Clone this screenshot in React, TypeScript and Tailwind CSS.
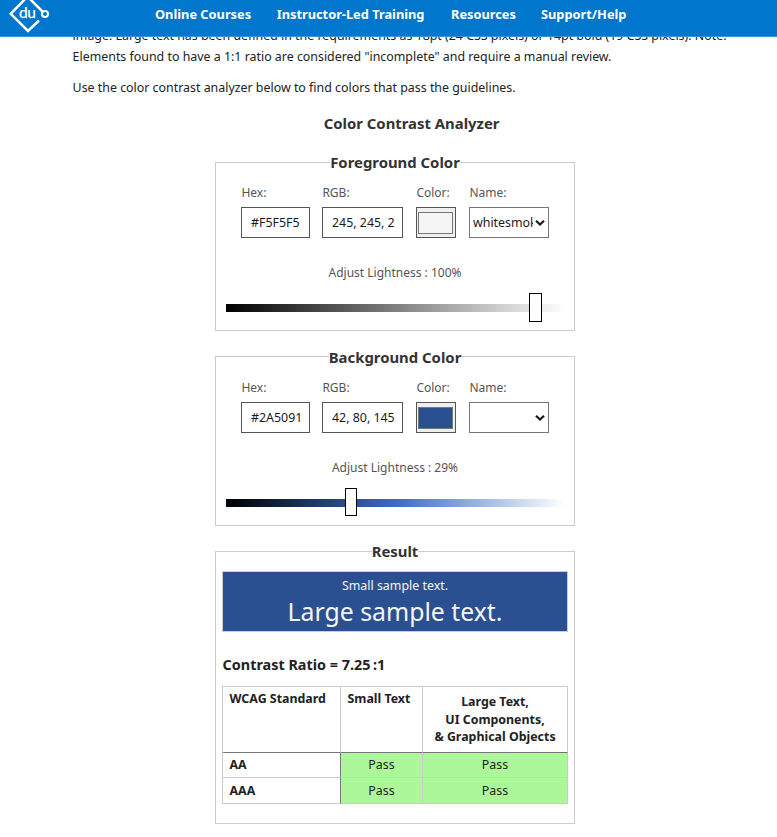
import React from "react";

type PickerProps = {
  title: string;
  hex: string;
  rgb: string;
  name: string;
  lightness: string;
  frameClass: string;
  legendClass: string;
  swatch: string;
  track: string;
  thumb: string;
};

const navLinks = [
  { label: "Online Courses", width: "w-[121.7px]" },
  { label: "Instructor-Led Training", width: "w-[174.3px]" },
  { label: "Resources", width: "w-[90px]" },
  { label: "Support/Help", width: "w-[100px]" },
];

const levels = [
  { name: "AA", pad: "pt-[2px]" },
  { name: "AAA", pad: "pt-[3px]" },
];

function Logo() {
  return (
    <svg width="42" height="37" viewBox="0 0 42 37" fill="none" className="ml-[9px] shrink-0">
      <path d="M33.5 11.5L18.5 -3.5L1.7 13.8L19 31L30 20.5" stroke="#fff" strokeWidth="2.5" />
      <circle cx="36" cy="14" r="3" stroke="#fff" strokeWidth="2" />
      <text
        x="10"
        y="18"
        fill="#fff"
        stroke="#fff"
        strokeWidth="0.25"
        fontSize="15.5"
        fontFamily="Lato, sans-serif"
        textLength="17"
      >
        du
      </text>
    </svg>
  );
}

function Label({ children }: { children: React.ReactNode }) {
  return <div className="h-[24px] pl-[0.4px] text-[12px] leading-[19px] text-[#555]">{children}</div>;
}

function Picker(p: PickerProps) {
  return (
    <fieldset className={`w-[360px] border border-[#ccc] ${p.frameClass}`}>
      <legend
        className={`mx-auto h-[23px] text-[14.88px] font-bold text-[#333] whitespace-nowrap ${p.legendClass}`}
      >
        {p.title}
      </legend>
      <div className="flex pl-[25px]">
        <div className="mr-3 w-[69px]">
          <Label>Hex:</Label>
          <input readOnly value={p.hex} className="block h-[31px] w-full border border-[#555] pl-[9px] text-[#1a1a1a]" />
        </div>
        <div className="mr-[13px] w-[81px]">
          <Label>RGB:</Label>
          <input readOnly value={p.rgb} className="block h-[31px] w-full border border-[#555] pr-[6px] pl-[9px] text-[#1a1a1a]" />
        </div>
        <div className="mr-[13px] w-10">
          <Label>Color:</Label>
          <div className="h-[31px] border border-[#555] bg-[#efefef] px-px py-1">
            <div className={`h-[22px] w-[35px] border border-[#777] ${p.swatch}`} />
          </div>
        </div>
        <div className="w-20">
          <Label>Name:</Label>
          <div className="flex h-[31px] items-center border border-[#767676] bg-white pl-[3px] text-[#1a1a1a]">
            <span className="w-[60px] overflow-hidden leading-[20px] whitespace-nowrap">{p.name}</span>
            <svg width="12" height="8" viewBox="0 0 12 8" fill="none" className="ml-px">
              <path d="M2 1.7L6 5.5L10 1.7" stroke="#1a1a1a" strokeWidth="2.2" />
            </svg>
          </div>
        </div>
      </div>
      <div className="mt-[25px] text-center text-[12px] leading-5 text-[#555]">
        Adjust Lightness : {p.lightness}
      </div>
      <div className={`mt-[21px] ml-[10px] flex h-2 w-[339px] items-center ${p.track}`}>
        <div className={`shrink-0 border border-black bg-white ${p.thumb}`} />
      </div>
    </fieldset>
  );
}

export default function App() {
  return (
    <div className="h-[837px] overflow-hidden bg-white font-['Noto_Sans',sans-serif] text-[12.4px] text-[#222]">
      <header className="relative z-10 flex h-[37px] border-b border-[#3b93d6] bg-[#0077cc]">
        <Logo />
        <nav className="ml-[104px] flex h-[29px] items-center text-[12.8px] font-bold text-white whitespace-nowrap">
          {navLinks.map((l) => (
            <a key={l.label} className={l.width}>
              {l.label}
            </a>
          ))}
        </nav>
      </header>
      <main className="-mt-[12px] pl-[72px]">
        <p className="pl-[0.6px] leading-[21px] whitespace-nowrap">
          image. Large text has been defined in the requirements as 18pt (24 CSS pixels) or 14pt bold (19 CSS pixels). Note:
          <br />
          Elements found to have a 1:1 ratio are considered "incomplete" and require a manual review.
        </p>
        <p className="mt-[10px] pl-[0.6px] leading-[21px]">
          Use the color contrast analyzer below to find colors that pass the guidelines.
        </p>
        <h2 className="mt-[14px] ml-[251.7px] text-[14.88px] leading-[22px] font-bold text-[#333]">
          Color Contrast Analyzer
        </h2>
        <div className="mt-[17px] ml-[143px] w-[360px]">
          <Picker
            title="Foreground Color"
            hex="#F5F5F5"
            rgb="245, 245, 2"
            name="whitesmoke"
            lightness="100%"
            frameClass="h-[180px]"
            legendClass="mb-[9px] leading-[23px]"
            swatch="bg-[#f5f5f5]"
            track="bg-linear-to-r/srgb from-black to-white"
            thumb="mb-px ml-[303px] h-[29px] w-[13px]"
          />
          <div className="h-[14px]" />
          <Picker
            title="Background Color"
            hex="#2A5091"
            rgb="42, 80, 145"
            name=""
            lightness="29%"
            frameClass="h-[181px]"
            legendClass="mb-[10px] pt-[2px] leading-[21px]"
            swatch="bg-[#2a5091]"
            track="bg-linear-to-r/srgb from-black via-[#396cc6] to-white"
            thumb="mb-[2px] ml-[119px] h-[28px] w-[12px]"
          />
          <div className="h-[14px]" />
          <fieldset className="h-[284px] border border-[#ccc] px-[6px]">
            <legend className="mx-auto h-[23px] text-[14.88px] leading-[23px] font-bold text-[#333]">Result</legend>
            <div className="mt-[8px] h-[61px] w-[346px] border border-[#ccc] bg-[#2a5091] pt-[4px] text-center text-[#f5f5f5]">
              <div className="leading-[20px]">Small sample text.</div>
              <div className="text-[24.8px] leading-[31px]">Large sample text.</div>
            </div>
            <div className="mt-[22px] h-[22px] pl-[0.6px] text-[14.4px] leading-[22px] font-bold">
              Contrast Ratio = 7.25<span className="ml-[2.5px]">:1</span>
            </div>
            <div className="mt-[10px] grid w-[346px] grid-cols-[118px_82px_145px] grid-rows-[66px_25px_26px] border-t border-l border-[#ccc] font-bold">
              <div className="border-r border-b border-[#ccc] border-b-[#777] pt-[3px] pl-[6.5px]">WCAG Standard</div>
              <div className="border-r border-b border-[#ccc] border-b-[#777] pt-[3px] pl-[6.5px]">Small Text</div>
              <div className="border-r border-b border-[#ccc] border-b-[#777] pt-[6px] text-center leading-[17.5px]">
                Large Text,
                <br />
                UI Components,
                <br />& Graphical Objects
              </div>
              {levels.map(({ name, pad }) => (
                <React.Fragment key={name}>
                  <div className={`border-r border-b border-[#ccc] border-r-[#777] pl-[6.5px] leading-[19px] ${pad}`}>
                    {name}
                  </div>
                  <div className={`border-r border-b border-[#ccc] bg-[#adf79b] text-center leading-[19px] font-normal ${pad}`}>
                    Pass
                  </div>
                  <div className={`border-r border-b border-[#ccc] bg-[#adf79b] text-center leading-[19px] font-normal ${pad}`}>
                    Pass
                  </div>
                </React.Fragment>
              ))}
            </div>
          </fieldset>
        </div>
      </main>
    </div>
  );
}
